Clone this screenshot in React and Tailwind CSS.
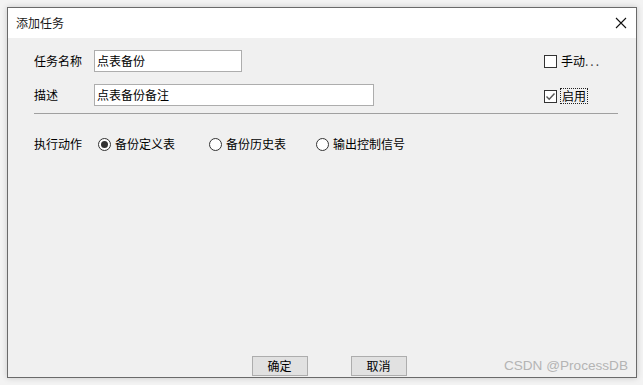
import React from "react";

const font = { fontFamily: '"Noto Sans CJK SC", "Microsoft YaHei", sans-serif' };

function Radio({ checked, label }) {
  return (
    <div className="flex items-center gap-[4px]">
      <span className="flex h-[13px] w-[13px] items-center justify-center rounded-full border border-[#333] bg-white">
        {checked && <span className="h-[7px] w-[7px] rounded-full bg-[#333]" />}
      </span>
      <span>{label}</span>
    </div>
  );
}

export default function App() {
  return (
    <div className="h-[385px] w-[643px] bg-[#f3f3f3] pl-[7px] pt-[7px] text-[12px] text-black" style={font}>
      <div className="relative flex h-[371px] w-[630px] flex-col border border-[#6a6a6a] bg-[#f0f0f0] shadow-[0_0_6px_rgba(0,0,0,0.18)]">
        <div className="flex h-[30px] items-center justify-between bg-white pl-[8px] pr-[9px]">
          <span className="text-[#1a1a1a]">添加任务</span>
          <svg width="12" height="12" viewBox="0 0 12 12">
            <path d="M1 1 L11 11 M11 1 L1 11" stroke="#111" strokeWidth="1.1" />
          </svg>
        </div>
        <div className="flex flex-1 flex-col pl-[26px] pr-[18px] pt-[12px]">
          <div className="flex h-[22px] items-center">
            <span className="w-[60px]">任务名称</span>
            <div className="flex h-[22px] w-[148px] items-center border border-[#adadad] bg-white pl-[2px]">点表备份</div>
            <div className="flex-1" />
            <div className="flex w-[74px] items-center gap-[4px]">
              <span className="h-[13px] w-[13px] border border-[#333] bg-white" />
              <span>手动<span className="tracking-[2px] text-[#444]">...</span></span>
            </div>
          </div>
          <div className="mt-[12px] flex h-[22px] items-center">
            <span className="w-[60px]">描述</span>
            <div className="flex h-[22px] w-[280px] items-center border border-[#adadad] bg-white pl-[2px]">点表备份备注</div>
            <div className="flex-1" />
            <div className="flex w-[74px] items-center gap-[3px] pt-[2px]">
              <span className="flex h-[13px] w-[13px] items-center justify-center border border-[#333] bg-white">
                <svg width="11" height="11" viewBox="0 0 11 11">
                  <path d="M1.5 5.5 L4.2 8.2 L9.5 2.5" stroke="#555" strokeWidth="1.4" fill="none" />
                </svg>
              </span>
              <span className="border border-dotted border-[#222] px-[1px] leading-[14px]">启用</span>
            </div>
          </div>
          <div className="mt-[7px] h-px bg-[#a0a0a0]" />
          <div className="mt-[21px] flex h-[18px] items-center">
            <span className="w-[64px]">执行动作</span>
            <div className="w-[111px]"><Radio checked label="备份定义表" /></div>
            <div className="w-[107px]"><Radio label="备份历史表" /></div>
            <Radio label="输出控制信号" />
          </div>
          <div className="mt-auto mb-[1px] flex justify-center gap-[43px] pl-[6px]">
            <button className="h-[20px] w-[56px] border border-[#adadad] bg-[#e1e1e1] text-[12px] leading-none">确定</button>
            <button className="h-[20px] w-[56px] border border-[#adadad] bg-[#e1e1e1] text-[12px] leading-none">取消</button>
          </div>
          <span className="absolute bottom-[1px] right-[8px] text-[13.6px] text-[#b4b4b4]" style={{ fontFamily: '"Liberation Sans", Arial, sans-serif' }}>CSDN @ProcessDB</span>
        </div>
      </div>
    </div>
  );
}
